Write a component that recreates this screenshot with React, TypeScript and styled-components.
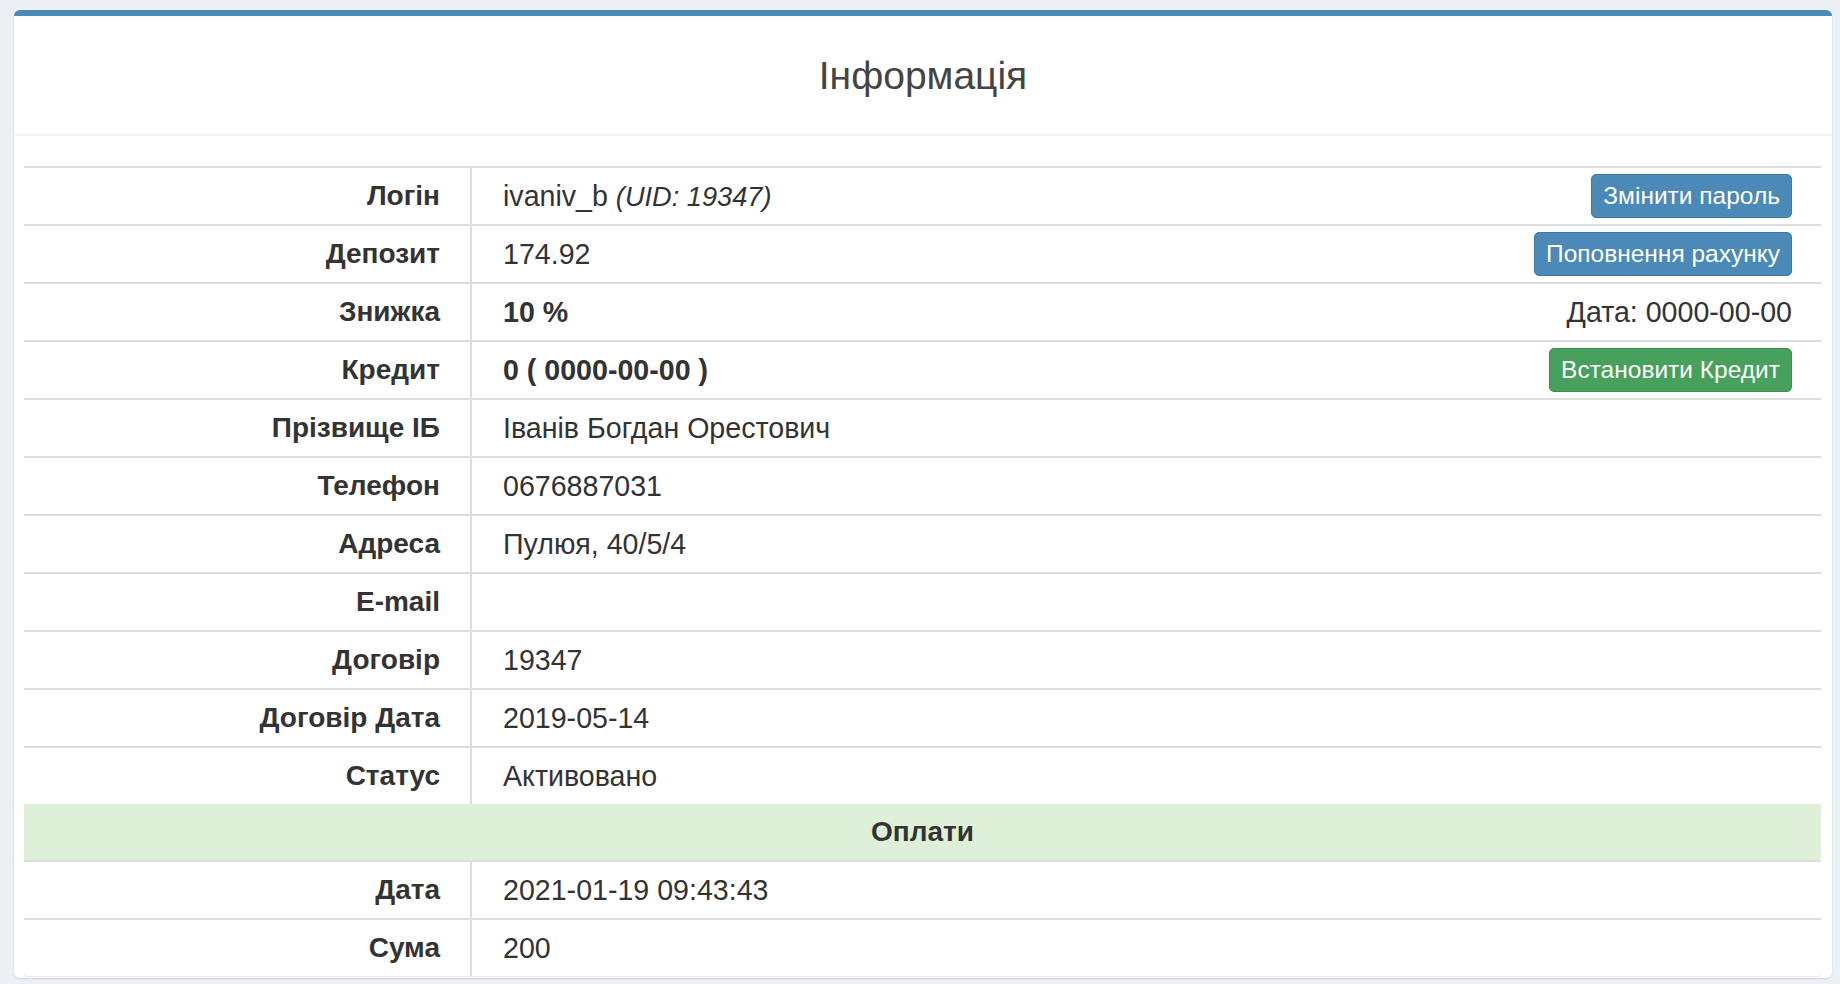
import React from "react";
import styled, { createGlobalStyle } from "styled-components";

const GlobalStyle = createGlobalStyle`
  html, body {
    margin: 0;
    padding: 0;
    background: #ecf0f5;
    font-family: "Liberation Sans", Arial, Helvetica, sans-serif;
    color: #333;
  }
  * { box-sizing: border-box; }
`;

const Page = styled.div`
  padding: 10px 8px 6px 14px;
`;

const Box = styled.section`
  background: #fff;
  border-top: 6px solid #4a8ab7;
  border-radius: 6px;
  box-shadow: 0 1px 2px rgba(0, 0, 0, 0.12);
  padding-bottom: 2px;
`;

const BoxHeader = styled.header`
  height: 120px;
  display: flex;
  align-items: center;
  justify-content: center;
  padding-top: 1px;
  border-bottom: 2px solid #f4f4f4;
`;

const Title = styled.h3`
  margin: 0;
  font-size: 39px;
  font-weight: 400;
  color: #444;
  line-height: 1;
`;

const BoxBody = styled.div`
  padding: 30px 11px 0 10px;
`;

const InfoTable = styled.div`
  border-radius: 0 0 4px 4px;
  box-shadow: 0 1px 1px rgba(0, 0, 0, 0.08);
`;

const Row = styled.div`
  display: grid;
  grid-template-columns: 448px 1fr;
  border-top: 2px solid #ddd;
  height: 58px;
`;

const LabelCell = styled.div`
  display: flex;
  align-items: center;
  justify-content: flex-end;
  padding-right: 30px;
  font-size: 28px;
  font-weight: 700;
  border-right: 2px solid #ddd;
`;

const ValueCell = styled.div<{ $bold?: boolean }>`
  display: flex;
  align-items: center;
  justify-content: space-between;
  padding: 0 29px 0 31px;
  font-size: 28.6px;
  font-weight: ${(p) => (p.$bold ? 700 : 400)};
`;

const Muted = styled.em`
  font-style: italic;
  font-size: 27.2px;
`;

const SideText = styled.span`
  font-weight: 400;
`;

const SectionRow = styled.div`
  height: 56px;
  background: #dff0d8;
  display: flex;
  align-items: center;
  justify-content: center;
  font-size: 28px;
  font-weight: 700;
`;

const ActionButton = styled.button<{ $variant: "primary" | "success" }>`
  height: 44px;
  padding: 0 11px;
  font-family: inherit;
  font-size: 24.5px;
  line-height: 1;
  color: #fff;
  border-radius: 5px;
  cursor: pointer;
  background: ${(p) => (p.$variant === "primary" ? "#4a89b8" : "#47a05c")};
  border: 1px solid ${(p) => (p.$variant === "primary" ? "#3d78a4" : "#3d8f50")};
`;

type Item = {
  label: string;
  value: React.ReactNode;
  bold?: boolean;
  side?: React.ReactNode;
};

const items: Item[] = [
  {
    label: "Логін",
    value: (
      <span>
        ivaniv_b <Muted>(UID: 19347)</Muted>
      </span>
    ),
    side: <ActionButton $variant="primary">Змінити пароль</ActionButton>,
  },
  {
    label: "Депозит",
    value: "174.92",
    side: <ActionButton $variant="primary">Поповнення рахунку</ActionButton>,
  },
  {
    label: "Знижка",
    value: "10 %",
    bold: true,
    side: <SideText>Дата: 0000-00-00</SideText>,
  },
  {
    label: "Кредит",
    value: "0 ( 0000-00-00 )",
    bold: true,
    side: <ActionButton $variant="success">Встановити Кредит</ActionButton>,
  },
  { label: "Прізвище ІБ", value: "Іванів Богдан Орестович" },
  { label: "Телефон", value: "0676887031" },
  { label: "Адреса", value: "Пулюя, 40/5/4" },
  { label: "E-mail", value: "" },
  { label: "Договір", value: "19347" },
  { label: "Договір Дата", value: "2019-05-14" },
  { label: "Статус", value: "Активовано" },
];

const payments: Item[] = [
  { label: "Дата", value: "2021-01-19 09:43:43" },
  { label: "Сума", value: "200" },
];

const InfoRow = ({ item }: { item: Item }) => (
  <Row>
    <LabelCell>{item.label}</LabelCell>
    <ValueCell $bold={item.bold}>
      <span>{item.value}</span>
      {item.side}
    </ValueCell>
  </Row>
);

export default function App() {
  return (
    <Page>
      <GlobalStyle />
      <Box>
        <BoxHeader>
          <Title>Інформація</Title>
        </BoxHeader>
        <BoxBody>
          <InfoTable>
            {items.map((it) => (
              <InfoRow key={it.label} item={it} />
            ))}
            <SectionRow>Оплати</SectionRow>
            {payments.map((it) => (
              <InfoRow key={it.label} item={it} />
            ))}
          </InfoTable>
        </BoxBody>
      </Box>
    </Page>
  );
}
